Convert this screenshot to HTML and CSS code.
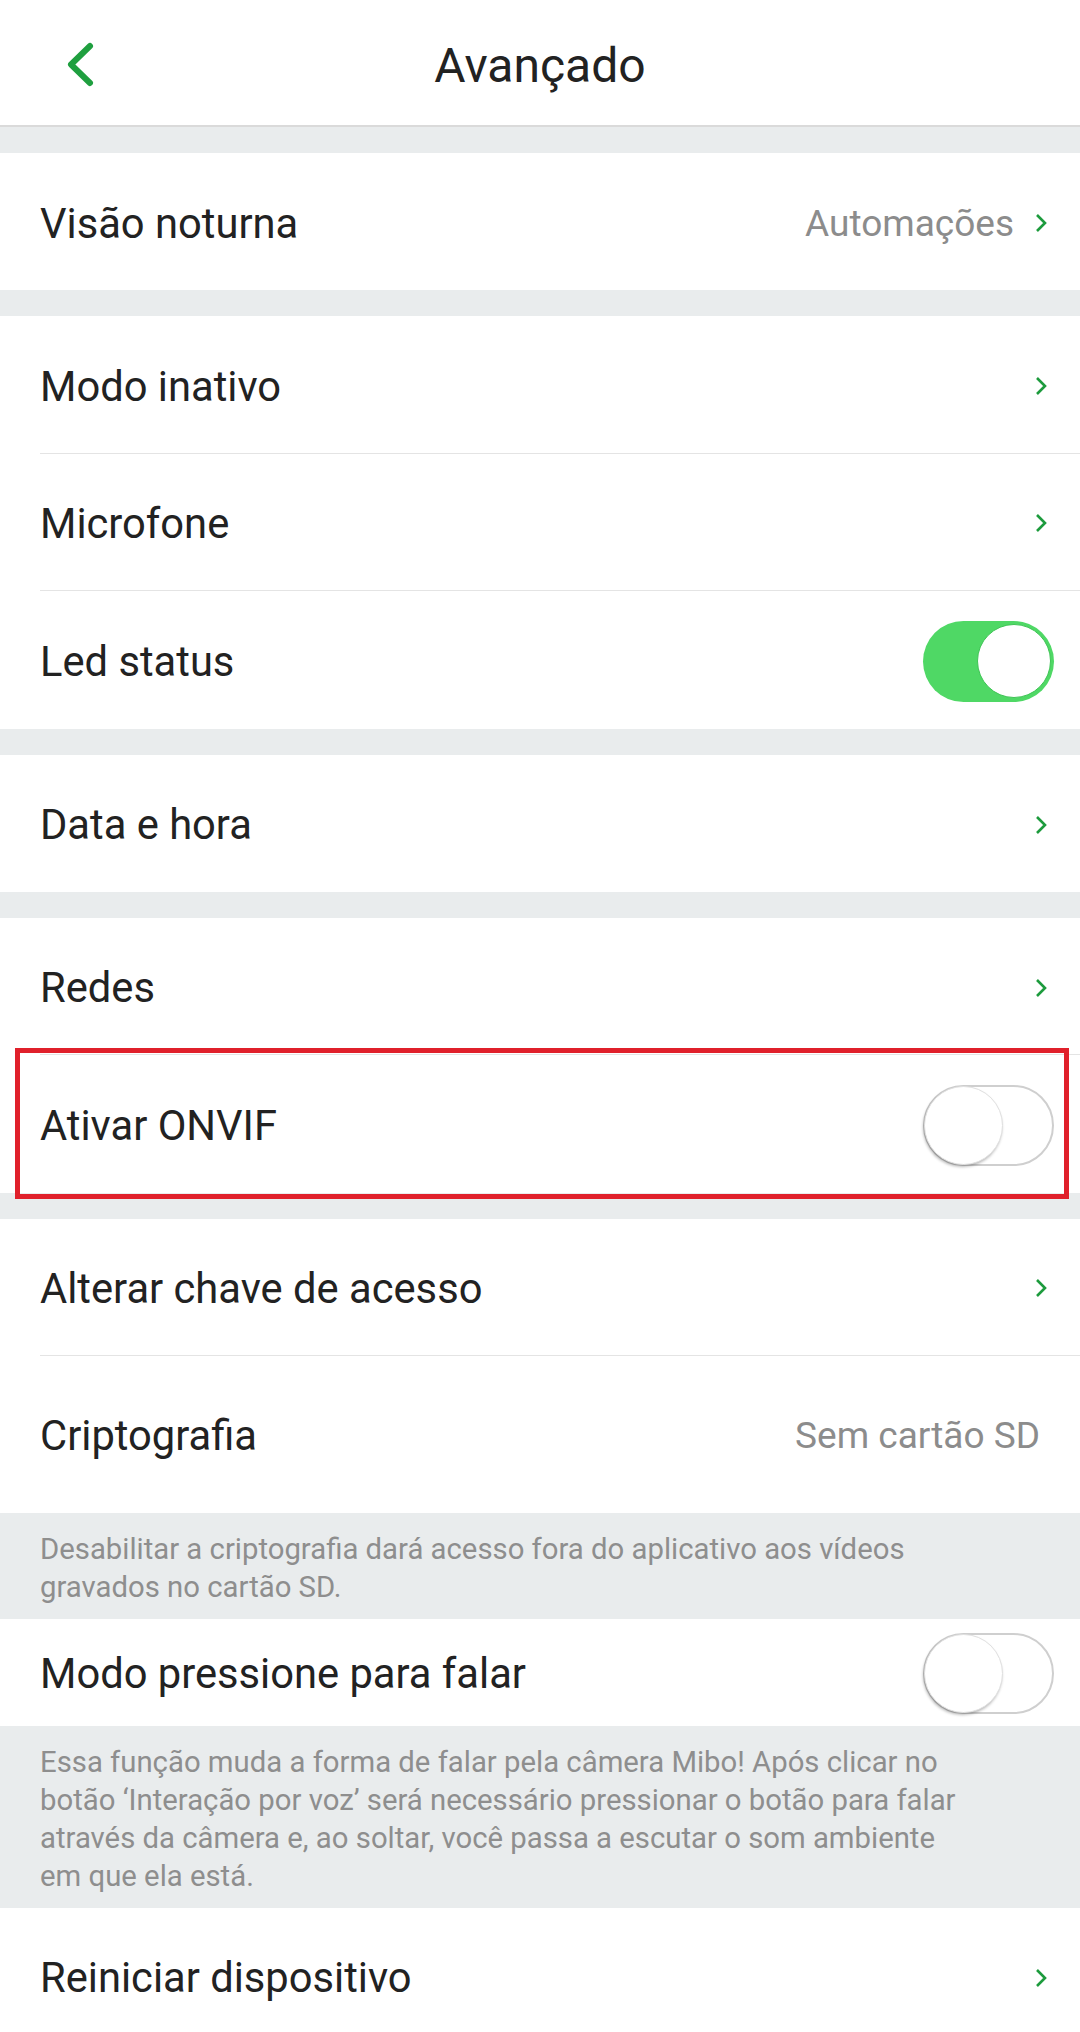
FILE: index.html
```html
<!DOCTYPE html>
<html lang="pt-BR">
<head>
    <meta charset="UTF-8">
    <meta name="viewport" content="width=device-width, initial-scale=1.0">
    <title>Avançado</title>
    <link rel="stylesheet" href="styles.css">
</head>
<body>
    <div class="Header">
        <div class="Header-Back">
            <svg width="40" height="60" viewBox="0 0 40 60">
                <path d="M30 13 L11 31.5 L30 50" fill="none" stroke="#1f9f3f" stroke-width="6" stroke-linecap="round" stroke-linejoin="round"/>
            </svg>
        </div>
        <div class="Header-Title">Avançado</div>
        <div></div>
    </div>

    <div class="Group">
        <div class="Row">
            <div class="Row-Inner">
                <span class="Row-Label">Visão noturna</span>
                <span class="Row-Value">Automações</span>
                <svg class="Chevron" width="14" height="22" viewBox="0 0 14 22"><path d="M3 3 L11 11 L3 19" fill="none" stroke="#1d9b3d" stroke-width="2.6"/></svg>
            </div>
        </div>
    </div>

    <div class="Group">
        <div class="Row">
            <div class="Row-Inner">
                <span class="Row-Label">Modo inativo</span>
                <svg class="Chevron" width="14" height="22" viewBox="0 0 14 22"><path d="M3 3 L11 11 L3 19" fill="none" stroke="#1d9b3d" stroke-width="2.6"/></svg>
            </div>
        </div>
        <div class="Row">
            <div class="Row-Inner">
                <span class="Row-Label">Microfone</span>
                <svg class="Chevron" width="14" height="22" viewBox="0 0 14 22"><path d="M3 3 L11 11 L3 19" fill="none" stroke="#1d9b3d" stroke-width="2.6"/></svg>
            </div>
        </div>
        <div class="Row">
            <div class="Row-Inner">
                <span class="Row-Label">Led status</span>
                <div class="Toggle Toggle-On"><div class="Toggle-Knob"></div></div>
            </div>
        </div>
    </div>

    <div class="Group">
        <div class="Row">
            <div class="Row-Inner">
                <span class="Row-Label">Data e hora</span>
                <svg class="Chevron" width="14" height="22" viewBox="0 0 14 22"><path d="M3 3 L11 11 L3 19" fill="none" stroke="#1d9b3d" stroke-width="2.6"/></svg>
            </div>
        </div>
    </div>

    <div class="Group">
        <div class="Row">
            <div class="Row-Inner">
                <span class="Row-Label">Redes</span>
                <svg class="Chevron" width="14" height="22" viewBox="0 0 14 22"><path d="M3 3 L11 11 L3 19" fill="none" stroke="#1d9b3d" stroke-width="2.6"/></svg>
            </div>
        </div>
        <div class="Row Row-Marked">
            <div class="Row-Inner">
                <span class="Row-Label">Ativar ONVIF</span>
                <div class="Toggle"><div class="Toggle-Knob"></div></div>
            </div>
            <div class="Highlight"></div>
        </div>
    </div>

    <div class="Group">
        <div class="Row">
            <div class="Row-Inner">
                <span class="Row-Label">Alterar chave de acesso</span>
                <svg class="Chevron" width="14" height="22" viewBox="0 0 14 22"><path d="M3 3 L11 11 L3 19" fill="none" stroke="#1d9b3d" stroke-width="2.6"/></svg>
            </div>
        </div>
        <div class="Row Row-Tall">
            <div class="Row-Inner">
                <span class="Row-Label">Criptografia</span>
                <span class="Row-Value Value-Only">Sem cartão SD</span>
            </div>
        </div>
    </div>
    <div class="Note">
        Desabilitar a criptografia dará acesso fora do aplicativo aos vídeos<br>
        gravados no cartão SD.
    </div>

    <div class="Group Group-Flush">
        <div class="Row Row-Short">
            <div class="Row-Inner">
                <span class="Row-Label">Modo pressione para falar</span>
                <div class="Toggle"><div class="Toggle-Knob"></div></div>
            </div>
        </div>
    </div>
    <div class="Note">
        Essa função muda a forma de falar pela câmera Mibo! Após clicar no<br>
        botão ‘Interação por voz’ será necessário pressionar o botão para falar<br>
        através da câmera e, ao soltar, você passa a escutar o som ambiente<br>
        em que ela está.
    </div>

    <div class="Group Group-Flush">
        <div class="Row">
            <div class="Row-Inner">
                <span class="Row-Label">Reiniciar dispositivo</span>
                <svg class="Chevron" width="14" height="22" viewBox="0 0 14 22"><path d="M3 3 L11 11 L3 19" fill="none" stroke="#1d9b3d" stroke-width="2.6"/></svg>
            </div>
        </div>
    </div>
</body>
</html>
```

FILE: styles.css
```css
body {
    margin: 0;
    font-family: Roboto, "Noto Sans", sans-serif;
    background-color: #e9eced;
    color: #222222;
}

.Header {
    height: 125px;
    background-color: #ffffff;
    border-bottom: 2px solid #dadada;
    display: grid;
    grid-template-columns: 1fr auto 1fr;
    align-items: center;
}

.Header-Back {
    padding-left: 60px;
    display: flex;
    align-items: center;
}

.Header-Title {
    font-size: 48px;
    padding-top: 5px;
    color: #222222;
}

.Group {
    margin-top: 26px;
    background-color: #ffffff;
}

.Group-Flush {
    margin-top: 0;
}

.Row {
    height: 137.4px;
    padding-left: 40px;
    display: flex;
    position: relative;
}

.Row-Tall {
    height: 156.5px;
}

.Row-Short {
    height: 107px;
}

.Row-Inner {
    flex: 1;
    display: flex;
    align-items: center;
    padding-right: 26px;
    padding-top: 3px;
    border-bottom: 1px solid #e4e4e4;
}

.Row:last-child .Row-Inner {
    border-bottom: none;
}

.Row-Label {
    flex: 1;
    font-size: 41.7px;
}

.Row-Value {
    font-size: 37px;
    color: #8c8c8c;
    margin-right: 20px;
}

.Value-Only {
    margin-right: 14px;
}

.Chevron {
    margin-right: 6px;
}

.Toggle {
    width: 131px;
    height: 81px;
    box-sizing: border-box;
    border-radius: 41px;
    border: 2px solid #cfcfcf;
    background-color: #ffffff;
    position: relative;
}

.Toggle-Knob {
    position: absolute;
    left: -1px;
    top: -1px;
    width: 79px;
    height: 79px;
    box-sizing: border-box;
    border-radius: 50%;
    background-color: #ffffff;
    border: 1px solid #e0e0e0;
    box-shadow: -1px 2px 3px rgba(0, 0, 0, 0.28);
}

.Toggle-On {
    border: none;
    background-color: #4fd865;
}

.Toggle-On .Toggle-Knob {
    left: auto;
    right: 3px;
    top: 3.5px;
    width: 74px;
    height: 74px;
    border: 1px solid #3fc455;
    box-shadow: none;
}

.Highlight {
    position: absolute;
    left: 15px;
    right: 11px;
    top: -7px;
    bottom: -6px;
    border: 5px solid #e0202b;
    pointer-events: none;
}

.Note {
    padding: 17px 20px 13px 40px;
    font-size: 29.3px;
    line-height: 38px;
    color: #8e8e8e;
}
```
